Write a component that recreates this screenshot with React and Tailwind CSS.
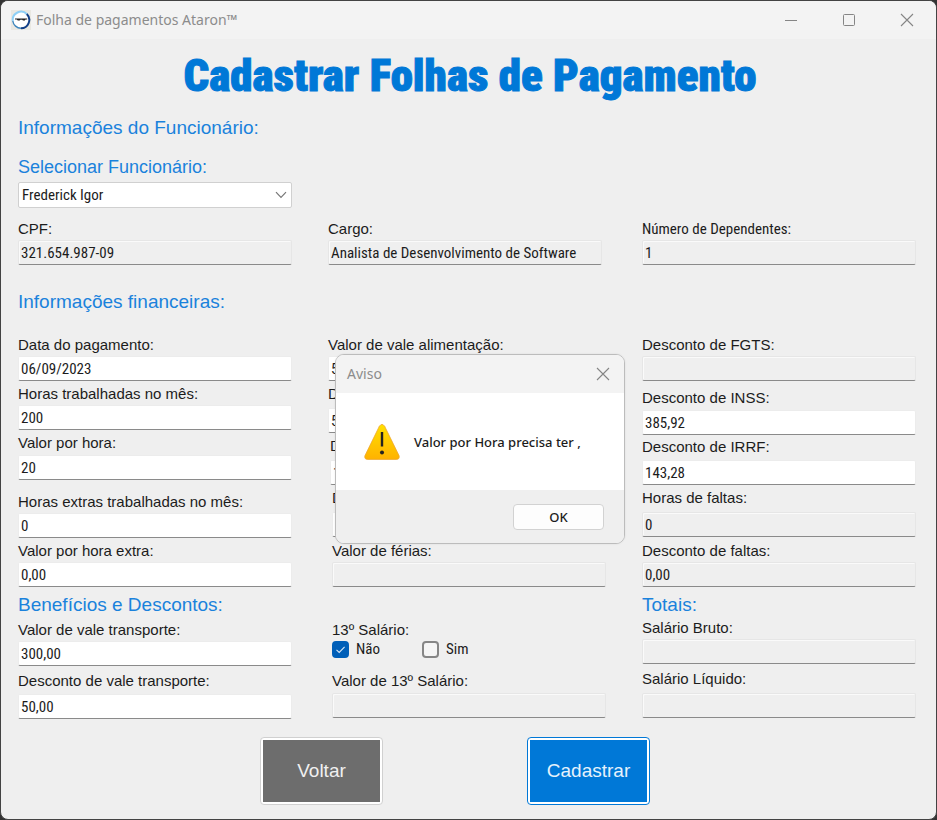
import { useId } from "react";
import { clsx } from "clsx";

const heading = "text-[19px] leading-6 text-[#1a82dc]";
const condensed = "font-['Roboto_Condensed',Roboto,sans-serif] text-[15px]";

function Field({
  label,
  value = "",
  readOnly = false,
  className = "",
  labelClass = "mb-px",
  labelFont = "text-[15px]",
}) {
  const id = useId();
  return (
    <div className={clsx("flex flex-col", className)}>
      <label htmlFor={id} className={clsx("leading-5 whitespace-nowrap", labelFont, labelClass)}>
        {label}
      </label>
      <input
        id={id}
        type="text"
        defaultValue={value}
        readOnly={readOnly}
        className={clsx(
          "h-[25px] w-full rounded-xs border border-b-[#8a8a8a] px-0.5 leading-5 outline-none",
          condensed,
          readOnly
            ? "border-[#e6e6e6] bg-[#efefef] shadow-[inset_1px_1px_0_#fafafa]"
            : "border-[#ececec] bg-white"
        )}
      />
    </div>
  );
}

function CheckOption({ label, checked = false }) {
  return (
    <label className={clsx("flex items-center gap-[7px] leading-[18px]", condensed)}>
      <span className="grid">
        <input
          type="checkbox"
          defaultChecked={checked}
          className="peer col-start-1 row-start-1 size-[17px] appearance-none rounded border-2 border-[#868686] bg-[#f5f5f5] checked:border-[#005fb8] checked:bg-[#005fb8]"
        />
        <svg
          viewBox="0 0 17 17"
          className="pointer-events-none invisible col-start-1 row-start-1 size-[17px] peer-checked:visible"
          fill="none"
          stroke="#d9e9f7"
          strokeWidth="1.1"
        >
          <path d="M4.5 8.8 7.2 11.4 12.6 5.8" />
        </svg>
      </span>
      {label}
    </label>
  );
}

function CloseIcon() {
  return (
    <svg viewBox="0 0 14 14" className="size-3.5" fill="none" stroke="#858585" strokeWidth="1.1">
      <path d="M1 1 13 13M13 1 1 13" />
    </svg>
  );
}

function TitleBar() {
  return (
    <header className="flex h-[38px] items-center bg-[#f3f3f3] pl-2.5">
      <svg viewBox="0 0 20 20" className="size-5">
        <rect width="20" height="20" fill="#e9e8e2" />
        <circle cx="10" cy="10" r="8" fill="#fff" />
        <path d="M1.8 11A8.3 8.3 0 0 1 16 4.2" fill="none" stroke="#8fd0f6" strokeWidth="2" />
        <path d="M15.8 4A8.3 8.3 0 0 1 10 18.2" fill="none" stroke="#123f86" strokeWidth="2" />
        <path d="M10 18.2A8.3 8.3 0 0 1 1.8 11" fill="none" stroke="#3f86bd" strokeWidth="1.4" />
        <path d="M4 8.6H16.2V9.6H14.6L13.8 10.6H12L11.2 9.8H9.4L8.6 10.6H6.8L5.8 9.6H4Z" fill="#222" />
      </svg>
      <span className="ml-[5px] flex-1 font-['Noto_Sans',sans-serif] text-sm text-[#8c8c8c]">
        Folha de pagamentos Ataron™
      </span>
      <button type="button" aria-label="Minimizar" className="flex h-full w-[58px] items-center justify-center">
        <svg viewBox="0 0 14 14" className="size-3.5" stroke="#858585">
          <path d="M1 7.5H13" />
        </svg>
      </button>
      <button type="button" aria-label="Maximizar" className="flex h-full w-[58px] items-center justify-center">
        <svg viewBox="0 0 14 14" className="size-3.5" fill="none" stroke="#858585">
          <rect x="1.5" y="1.5" width="11" height="11" rx="1" />
        </svg>
      </button>
      <button type="button" aria-label="Fechar" className="flex h-full w-[58px] items-center justify-center">
        <CloseIcon />
      </button>
    </header>
  );
}

function WarningDialog() {
  return (
    <section
      role="alertdialog"
      aria-labelledby="aviso-titulo"
      aria-describedby="aviso-texto"
      className="absolute top-[354px] left-[335px] flex h-[190px] w-[290px] flex-col overflow-hidden rounded-[9px] border border-[#bcbcbc] bg-white font-['Noto_Sans',sans-serif] shadow-[0_0_2px_rgba(0,0,0,0.1)]"
    >
      <header className="flex h-[38px] items-center justify-between bg-[#f3f3f3] pl-[11px]">
        <h2 id="aviso-titulo" className="text-sm text-[#8c8c8c]">
          Aviso
        </h2>
        <button type="button" aria-label="Fechar" className="flex h-full w-[42px] items-center justify-center">
          <CloseIcon />
        </button>
      </header>
      <div className="flex flex-1 items-center gap-[13px] pt-0.5 pl-[27px]">
        <svg viewBox="0 0 38 38" className="size-[38px]">
          <defs>
            <linearGradient id="alerta" x1="0" y1="0" x2="0" y2="1">
              <stop offset="0" stopColor="#ffe000" />
              <stop offset="1" stopColor="#ffb200" />
            </linearGradient>
          </defs>
          <path
            d="M16.4 2.2Q19 -1.4 21.6 2.2L36 31.6Q37 35.2 33.6 35.4H4.4Q1 35.2 2 31.6Z"
            fill="url(#alerta)"
            stroke="#eda62c"
            strokeWidth="0.8"
          />
          <path d="M19 8V22.5" stroke="#222" strokeWidth="2.4" />
          <circle cx="19" cy="28.5" r="2" fill="#222" />
        </svg>
        <p id="aviso-texto" className="text-[13px] font-medium">
          Valor por Hora precisa ter ,
        </p>
      </div>
      <footer className="flex h-[53px] items-center justify-end bg-[#efefef] pr-5">
        <button
          type="button"
          className="h-[26px] w-[91px] rounded border border-[#d2d2d2] bg-[#fdfdfd] text-[13px] leading-5 font-medium"
        >
          OK
        </button>
      </footer>
    </section>
  );
}

export default function App() {
  return (
    <div className="relative min-h-screen bg-[#333] font-['Liberation_Sans',Arial,sans-serif] text-[#1c1c1c]">
      <div className="flex min-h-screen flex-col overflow-hidden rounded-lg border border-[#434343] bg-[#efefef]">
        <TitleBar />
        <main className="flex flex-1 flex-col pr-5 pl-[17px]">
          <h1 className="mt-2.5 pl-1.5 text-center font-[Impact,'Roboto_Condensed',Roboto,sans-serif] text-[45px] leading-[54px] font-black text-[#0078d7] [-webkit-text-stroke:1px_#0078d7]">
            Cadastrar Folhas de Pagamento
          </h1>

          <h2 className={clsx("mt-[13px]", heading)}>Informações do Funcionário:</h2>
          <label htmlFor="funcionario" className="mt-[15px] text-lg leading-6 text-[#1a82dc]">
            Selecionar Funcionário:
          </label>
          <div className="mt-[3px] grid w-[274px] items-center">
            <select
              id="funcionario"
              className={clsx(
                "col-start-1 row-start-1 h-[26px] appearance-none rounded-xs border border-[#d0d0d0] bg-white px-[3px] leading-5 outline-none",
                condensed
              )}
            >
              <option>Frederick Igor</option>
            </select>
            <svg
              viewBox="0 0 12 8"
              className="pointer-events-none col-start-1 row-start-1 mr-[5px] h-2 w-3 justify-self-end"
              fill="none"
              stroke="#777"
              strokeWidth="1.2"
            >
              <path d="M1 1.2 6 6.4 11 1.2" />
            </svg>
          </div>

          <div className="mt-[11px] grid grid-cols-3 gap-x-[38px]">
            <Field label="CPF:" value="321.654.987-09" readOnly />
            <Field label="Cargo:" value="Analista de Desenvolvimento de Software" readOnly className="-ml-0.5 mr-0.5" />
            <Field label="Número de Dependentes:" labelFont={condensed} value="1" readOnly />
          </div>

          <h2 className={clsx("mt-[25px]", heading)}>Informações financeiras:</h2>

          <div className="mt-[21px] grid grid-cols-3 gap-x-[38px]">
            <div className="flex flex-col">
              <Field label="Data do pagamento:" value="06/09/2023" />
              <Field className="mt-[3px]" label="Horas trabalhadas no mês:" value="200" />
              <Field className="mt-[3px]" labelClass="mb-0.5" label="Valor por hora:" value="20" />
              <Field className="mt-3" label="Horas extras trabalhadas no mês:" value="0" />
              <Field className="mt-[3px]" label="Valor por hora extra:" value="0,00" />
            </div>
            <div className="flex flex-col">
              <Field className="-ml-0.5 mr-0.5" label="Valor de vale alimentação:" value="500" />
              <Field className="mt-[3px] -ml-0.5 mr-0.5" labelClass="mb-1" label="Dias:" value="50" />
              <Field className="mt-[3px]" labelClass="mb-1" label="Dias:" value="10" />
              <Field className="mt-[3px] ml-0.5 -mr-0.5" labelClass="mb-1" label="Dias:" value="0" />
              <Field className="mt-1 ml-0.5 -mr-0.5" label="Valor de férias:" readOnly />
            </div>
            <div className="flex flex-col">
              <Field label="Desconto de FGTS:" readOnly />
              <Field className="mt-[7px]" labelClass="mb-0.5" label="Desconto de INSS:" value="385,92" />
              <Field className="mt-0.5" labelClass="mb-[3px]" label="Desconto de IRRF:" value="143,28" />
              <Field className="mt-[3px]" labelClass="mb-1" label="Horas de faltas:" value="0" readOnly />
              <Field className="mt-1" label="Desconto de faltas:" value="0,00" readOnly />
            </div>
          </div>

          <div className="mt-1.5 grid grid-cols-3 gap-x-[38px]">
            <div className="flex flex-col">
              <h2 className={heading}>Benefícios e Descontos:</h2>
              <Field className="mt-[3px]" label="Valor de vale transporte:" value="300,00" />
              <Field className="mt-[5px]" labelClass="mb-[3px]" label="Desconto de vale transporte:" value="50,00" />
            </div>
            <div className="-mr-0.5 ml-0.5 flex flex-col pt-[27px]">
              <fieldset>
                <legend className="text-[15px] leading-5">13º Salário:</legend>
                <div className="flex gap-[42px]">
                  <CheckOption label="Não" checked />
                  <CheckOption label="Sim" />
                </div>
              </fieldset>
              <Field className="mt-[13px]" labelClass="mb-0.5" label="Valor de 13º Salário:" readOnly />
            </div>
            <div className="flex flex-col">
              <h2 className={heading}>Totais:</h2>
              <Field className="mt-px" label="Salário Bruto:" readOnly />
              <Field className="mt-[5px]" labelClass="mb-1" label="Salário Líquido:" readOnly />
            </div>
          </div>

          <div className="mt-[18px] mb-3.5 flex justify-center gap-36 pr-6">
            <button
              type="button"
              className="h-[68px] w-[123px] rounded border border-[#d0d0d0] bg-white p-0.5 text-[19px] text-[#f0f0f0]"
            >
              <span className="flex h-full items-center justify-center bg-[#6d6d6d]">Voltar</span>
            </button>
            <button
              type="button"
              className="h-[68px] w-[123px] rounded border border-[#0078d7] bg-white p-0.5 text-[19px] text-[#e6f2fc]"
            >
              <span className="flex h-full items-center justify-center bg-[#0078d7]">Cadastrar</span>
            </button>
          </div>
        </main>
      </div>
      <WarningDialog />
    </div>
  );
}
